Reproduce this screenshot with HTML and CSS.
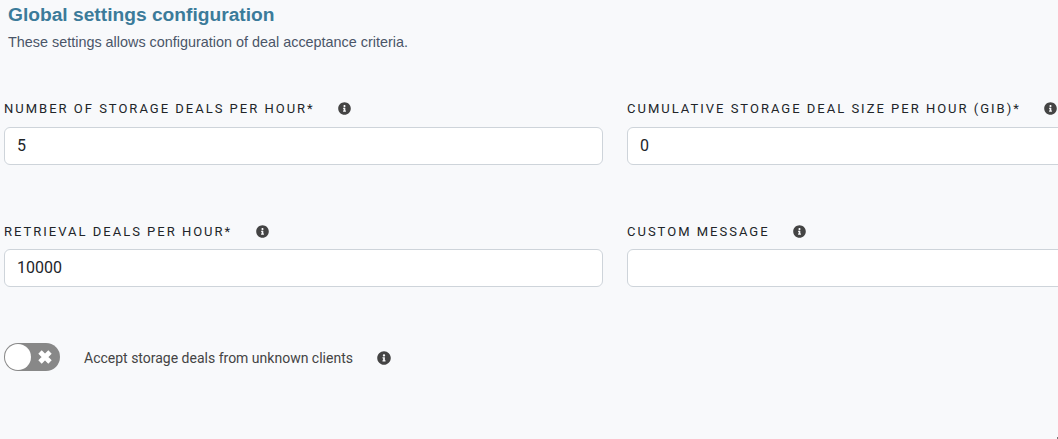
FILE: index.html
```html
<!DOCTYPE html>
<html lang="en">
<head>
<meta charset="utf-8">
<title>Global settings configuration</title>
<link rel="stylesheet" href="styles.css">
</head>
<body>
<svg class="defs" width="0" height="0">
  <symbol id="info" viewBox="0 0 512 512"><path d="M256 8C119.043 8 8 119.083 8 256c0 136.997 111.043 248 248 248s248-111.003 248-248C504 119.083 392.957 8 256 8zm0 110c23.196 0 42 18.804 42 42s-18.804 42-42 42-42-18.804-42-42 18.804-42 42-42zm56 254c0 6.627-5.373 12-12 12h-88c-6.627 0-12-5.373-12-12v-24c0-6.627 5.373-12 12-12h12v-64h-12c-6.627 0-12-5.373-12-12v-24c0-6.627 5.373-12 12-12h64c6.627 0 12 5.373 12 12v100h12c6.627 0 12 5.373 12 12v24z"/></symbol>
</svg>
<header class="intro">
  <h1 class="title">Global settings configuration</h1>
  <p class="description">These settings allows configuration of deal acceptance criteria.</p>
</header>
<form class="settings">
  <div class="field">
    <div class="label-row"><label for="storage">Number of storage deals per hour*</label><svg class="info"><use href="#info"/></svg></div>
    <input id="storage" class="control" type="text" value="5">
  </div>
  <div class="field">
    <div class="label-row"><label for="size">Cumulative storage deal size per hour (GiB)*</label><svg class="info"><use href="#info"/></svg></div>
    <input id="size" class="control" type="text" value="0">
  </div>
  <div class="field field-compact">
    <div class="label-row"><label for="retrieval">Retrieval deals per hour*</label><svg class="info"><use href="#info"/></svg></div>
    <input id="retrieval" class="control" type="text" value="10000">
  </div>
  <div class="field field-compact">
    <div class="label-row"><label for="message">Custom message</label><svg class="info"><use href="#info"/></svg></div>
    <input id="message" class="control" type="text" value="">
  </div>
</form>
<div class="toggle-row">
  <div class="switch" role="switch" aria-checked="false">
    <span class="knob"></span>
    <svg class="cross" viewBox="0 0 16 16"><path d="M3 3l10 10M13 3l-10 10"/></svg>
  </div>
  <span class="toggle-label">Accept storage deals from unknown clients</span>
  <svg class="info info-large"><use href="#info"/></svg>
</div>
<span class="corner"></span>
</body>
</html>
```
FILE: styles.css
```css
* { box-sizing: border-box; }
html { overflow: hidden; }
body {
  margin: 0;
  height: 439px;
  overflow: hidden;
  background: #f8f9fb;
  font-family: Roboto, sans-serif;
  color: #212529;
}
.defs { position: absolute; }
.intro {
  padding: 3px 8px 0;
  height: 97px;
  font-family: "Liberation Sans", Arial, sans-serif;
}
.title {
  margin: 0;
  font-size: 19.2px;
  line-height: 23px;
  color: #3b7b9a;
}
.description {
  margin: 6px 0 0;
  font-size: 14.4px;
  line-height: 20px;
  color: #4a5568;
}
.settings {
  display: grid;
  grid-template-columns: 599px 599px;
  column-gap: 24px;
  row-gap: 55px;
  width: 1054px;
  margin-left: 4px;
}
.label-row {
  display: flex;
  align-items: center;
  gap: 23.5px;
  height: 23px;
  margin-bottom: 7px;
  font-size: 13px;
  letter-spacing: 2px;
  text-transform: uppercase;
  white-space: nowrap;
}
.field-compact .label-row { margin-bottom: 6px; }
.info {
  flex: none;
  width: 13px;
  height: 13px;
  fill: #444;
}
.info-large {
  width: 14px;
  height: 14px;
  margin-top: 1px;
}
.control {
  display: block;
  width: 100%;
  height: 38px;
  padding: 5px 12px 7px;
  border: 1px solid #ced4da;
  border-radius: 6px;
  background: #fff;
  color: #212529;
  font: 16px/24px Roboto, sans-serif;
}
.toggle-row {
  display: flex;
  align-items: center;
  gap: 24px;
  margin: 56px 0 0 4px;
  height: 28px;
}
.switch {
  display: flex;
  align-items: center;
  justify-content: space-between;
  width: 56px;
  height: 28px;
  padding: 0 7px 0 1px;
  border-radius: 14px;
  background: #888;
}
.knob {
  width: 26px;
  height: 26px;
  border-radius: 50%;
  background: #fff;
}
.cross {
  width: 16px;
  height: 16px;
  fill: none;
  stroke: #fff;
  stroke-width: 4.8;
}
.toggle-label {
  padding-top: 2px;
  font-size: 14px;
  color: #444;
}
.corner {
  position: absolute;
  right: 0;
  bottom: 0;
  width: 1px;
  height: 2px;
  background: #777;
}
```
